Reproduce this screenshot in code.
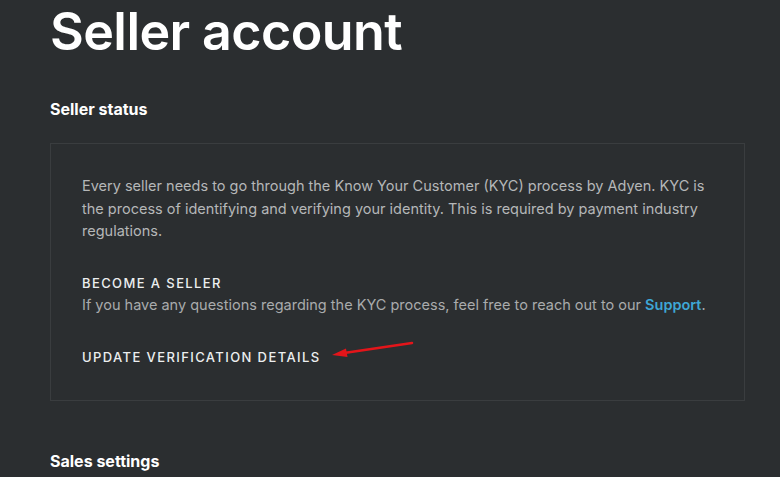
export default function App() {
  return (
    <div className="min-h-[477px] w-full overflow-hidden bg-[#2b2e30] px-[50px] font-['Inter',sans-serif] text-white">
      <h1 className="pt-[4px] text-[52px] font-semibold leading-[56px] tracking-[-0.6px] text-white">
        Seller account
      </h1>

      <h2 className="mt-[38px] text-[16px] font-bold leading-[22px]">Seller status</h2>

      <section className="mt-[23px] w-[695px] border border-[#3a3d3f] px-[31px] pb-[32px] pt-[31px]">
        <p className="text-[14.5px] leading-[22.5px] text-[#b5b7b8]">
          Every seller needs to go through the Know Your Customer (KYC) process by Adyen. KYC is
          the process of identifying and verifying your identity. This is required by payment industry
          regulations.
        </p>

        <div className="mt-[29px] text-[13px] font-medium uppercase leading-[22px] tracking-[1.4px] text-[#eceeef]">
          Become a seller
        </div>
        <p className="text-[14.5px] leading-[22px] text-[#a9abac]">
          If you have any questions regarding the KYC process, feel free to reach out to our{' '}
          <a className="font-semibold text-[#3ea7d6]">Support</a>.
        </p>

        <div className="relative mt-[30px] text-[13px] font-medium uppercase leading-[22px] tracking-[1.4px] text-[#eceeef]">
          Update verification details
          <svg
            className="absolute left-[248px] top-[-6px]"
            width="90"
            height="22"
            viewBox="0 0 90 22"
          >
            <line x1="82" y1="3" x2="14" y2="13" stroke="#e3151a" strokeWidth="2.5" strokeLinecap="round" />
            <polygon points="2,15 16,8.5 17.5,17" fill="#e3151a" />
          </svg>
        </div>
      </section>

      <h2 className="mt-[49px] text-[16px] font-bold leading-[22px]">Sales settings</h2>
    </div>
  )
}
